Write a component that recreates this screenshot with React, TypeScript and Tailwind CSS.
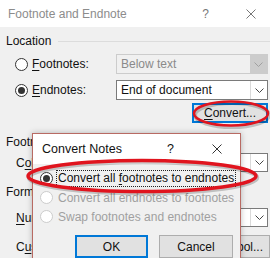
import React from 'react';

const font = { fontFamily: '"Liberation Sans", Arial, sans-serif' };

const CloseIcon: React.FC<{ className?: string }> = ({ className }) => (
  <svg viewBox="0 0 10 10" className={className} fill="none" stroke="currentColor" strokeWidth="1">
    <path d="M0.5 0.5 L9.5 9.5 M9.5 0.5 L0.5 9.5" />
  </svg>
);

const Chevron: React.FC = () => (
  <svg viewBox="0 0 9 5" className="h-[5px] w-[9px]" fill="none" stroke="currentColor" strokeWidth="1">
    <path d="M0.5 0.5 L4.5 4.5 L8.5 0.5" />
  </svg>
);

const Radio: React.FC<{ checked?: boolean; disabled?: boolean }> = ({ checked, disabled }) => (
  <span
    className={`flex h-[13px] w-[13px] shrink-0 items-center justify-center rounded-full border bg-white ${
      disabled ? 'border-[#cccccc]' : 'border-[#333333]'
    }`}
  >
    {checked && <span className="h-[7px] w-[7px] rounded-full bg-[#333333]" />}
  </span>
);

const Select: React.FC<{ value?: string; disabled?: boolean }> = ({ value, disabled }) => (
  <div
    className={`ml-auto flex h-full w-[152px] items-stretch border ${
      disabled ? 'border-[#cccccc] bg-[#f0f0f0] text-[#8a8a8a]' : 'border-[#7a7a7a] bg-white text-[#111]'
    }`}
  >
    <span className="flex flex-1 items-center whitespace-nowrap pl-[4px]">{value}</span>
    <span
      className={`flex w-[17px] items-center justify-center ${
        disabled ? 'bg-[#cccccc] text-[#a0a0a0]' : 'border-l border-[#dadada] text-[#444]'
      }`}
    >
      <Chevron />
    </span>
  </div>
);

const U: React.FC<{ children: React.ReactNode }> = ({ children }) => <span className="underline underline-offset-2">{children}</span>;

export default function App() {
  return (
    <div className="relative h-[258px] w-[270px] overflow-hidden whitespace-nowrap bg-[#f0f0f0] text-[12px] text-[#111]" style={font}>
      {/* title bar */}
      <div className="flex h-[27px] items-center bg-white pl-2 text-[12px] text-[#8c8c8c]">
        <span>Footnote and Endnote</span>
        <span className="ml-auto mr-[37px] text-[#777]">?</span>
        <CloseIcon className="mr-[14px] h-[10px] w-[10px] text-[#777]" />
      </div>

      <div className="pl-[6px]">
        <div className="mt-[6px] flex h-4 items-center">
          <span>Location</span>
          <span className="ml-[7px] h-px flex-1 bg-[#dcdcdc]" />
        </div>

        <div className="mt-[5px] flex h-5 items-center pr-[2px]">
          <span className="ml-[9px]"><Radio /></span>
          <span className="ml-[4px]"><U>F</U>ootnotes:</span>
          <Select value="Below text" disabled />
        </div>

        <div className="mt-[6px] flex h-5 items-center pr-[2px]">
          <span className="ml-[9px]"><Radio checked /></span>
          <span className="ml-[4px]"><U>E</U>ndnotes:</span>
          <Select value="End of document" />
        </div>

        <div className="mt-[3px] flex h-5 justify-end pr-[2px]">
          <div className="flex w-[76px] items-center justify-center border-2 border-[#0078d7] bg-[#e1e1e1]">
            <span><U>C</U>onvert...</span>
          </div>
        </div>

        <div className="mt-[11px] flex h-4 items-center">Footnote layout</div>

        <div className="mt-[3px] flex h-[19px] items-center pr-[2px]">
          <span className="ml-[10px]">C<U>o</U>lumns:</span>
          <Select value="" />
        </div>

        <div className="mt-[12px] flex h-4 items-center">Format</div>

        <div className="mt-[8px] flex h-[19px] items-center pr-[2px]">
          <span className="ml-[10px]"><U>N</U>umber format:</span>
          <Select value="" />
        </div>

        <div className="mt-[8px] flex h-[23px] items-center">
          <span className="ml-[10px]">C<U>u</U>stom mark:</span>
          <div className="ml-auto flex h-full w-[74px] items-center justify-center border border-[#adadad] bg-[#e1e1e1] pl-[10px]">
            Symbol...
          </div>
        </div>
      </div>

      {/* Convert Notes dialog */}
      <div className="absolute left-[32px] top-[133px] w-[209px] border border-[#b86a63] bg-[#f0f0f0] shadow-[0_0_6px_rgba(0,0,0,0.25)]">
        <div className="flex h-[30px] items-center bg-white pl-[9px] text-[12.5px] text-[#111]">
          <span>Convert Notes</span>
          <span className="ml-auto mr-[38px]">?</span>
          <CloseIcon className="mr-[18px] h-[10px] w-[10px] text-[#333]" />
        </div>
        <div className="flex flex-col pl-[7px] pt-[6px]">
          <div className="flex h-[17px] items-center">
            <Radio checked />
            <span className="ml-[3px] border border-dotted border-[#222] px-px leading-[15px]">
              Convert all <U>f</U>ootnotes to endnotes
            </span>
          </div>
          <div className="mt-[2px] flex h-[17px] items-center text-[#a0a0a0]">
            <Radio disabled />
            <span className="ml-[5px]">Convert all endnotes to footnotes</span>
          </div>
          <div className="mt-[2px] flex h-[17px] items-center text-[#a0a0a0]">
            <Radio disabled />
            <span className="ml-[5px]">Swap footnotes and endnotes</span>
          </div>
          <div className="mt-[10px] flex gap-[11px] pl-[35px]">
            <div className="flex h-[23px] w-[73px] items-center justify-center border-2 border-[#0078d7] bg-[#e1e1e1]">OK</div>
            <div className="flex h-[23px] w-[74px] items-center justify-center border border-[#adadad] bg-[#e1e1e1]">Cancel</div>
          </div>
          <div className="h-[20px]" />
        </div>
      </div>

      {/* red annotation ellipses */}
      <svg className="pointer-events-none absolute left-0 top-0 h-[258px] w-[270px]" viewBox="0 0 270 258">
        <ellipse cx="231" cy="113.5" rx="37" ry="12" fill="none" stroke="rgba(0,0,0,0.2)" strokeWidth="4" transform="translate(1 1.5)" />
        <ellipse cx="231" cy="113.5" rx="37" ry="12" fill="none" stroke="#e0141e" strokeWidth="2.5" />
        <ellipse cx="142" cy="176" rx="114" ry="15.5" fill="none" stroke="rgba(0,0,0,0.2)" strokeWidth="4.5" transform="translate(1 1.5)" />
        <ellipse cx="142" cy="176" rx="114" ry="15.5" fill="none" stroke="#e0141e" strokeWidth="3.5" />
      </svg>
    </div>
  );
}
